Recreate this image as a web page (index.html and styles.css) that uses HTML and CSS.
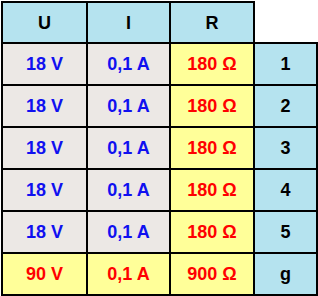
FILE: index.html
```html
<!DOCTYPE html>
<html>
<head>
<meta charset="utf-8">
<link rel="stylesheet" href="styles.css">
</head>
<body>
<table class="grid">
  <colgroup>
    <col class="c1"><col class="c2"><col class="c3"><col class="c4">
  </colgroup>
  <tr class="head">
    <td class="hd first">U</td>
    <td class="hd">I</td>
    <td class="hd">R</td>
    <td class="blank"></td>
  </tr>
  <tr class="row">
    <td class="grey blue first">18 V</td>
    <td class="grey blue">0,1 A</td>
    <td class="yellow red">180 Ω</td>
    <td class="hd">1</td>
  </tr>
  <tr class="row">
    <td class="grey blue first">18 V</td>
    <td class="grey blue">0,1 A</td>
    <td class="yellow red">180 Ω</td>
    <td class="hd">2</td>
  </tr>
  <tr class="row">
    <td class="grey blue first">18 V</td>
    <td class="grey blue">0,1 A</td>
    <td class="yellow red">180 Ω</td>
    <td class="hd">3</td>
  </tr>
  <tr class="row">
    <td class="grey blue first">18 V</td>
    <td class="grey blue">0,1 A</td>
    <td class="yellow red">180 Ω</td>
    <td class="hd">4</td>
  </tr>
  <tr class="row">
    <td class="grey blue first">18 V</td>
    <td class="grey blue">0,1 A</td>
    <td class="yellow red">180 Ω</td>
    <td class="hd">5</td>
  </tr>
  <tr class="row">
    <td class="yellow red first">90 V</td>
    <td class="yellow red">0,1 A</td>
    <td class="yellow red">900 Ω</td>
    <td class="hd">g</td>
  </tr>
</table>
</body>
</html>
```
FILE: styles.css
```css
html, body {
  margin: 0;
  padding: 0;
  background: #ffffff;
}
body {
  padding: 1px 0 0 1px;
}
.grid {
  border-collapse: separate;
  border-spacing: 0;
  table-layout: fixed;
  width: 317px;
  font-family: "Liberation Sans", Arial, sans-serif;
  font-weight: bold;
  font-size: 18px;
}
.c1 { width: 87px; }
.c2 { width: 83px; }
.c3 { width: 84px; }
.c4 { width: 63px; }
.grid td {
  padding: 0;
  text-align: center;
  vertical-align: middle;
  border-right: 2px solid #000;
  border-bottom: 2px solid #000;
  line-height: 20px;
}
.grid td.first {
  border-left: 2px solid #000;
}
.head td {
  border-top: 2px solid #000;
  height: 39px;
}
.head td.blank {
  border-top: none;
  border-right: none;
  background: #ffffff;
}
.row td {
  height: 40px;
}
.hd {
  background: #b5e3ef;
  color: #000;
}
.grey {
  background: #ece8e5;
}
.yellow {
  background: #ffff99;
}
.blue {
  color: #1010f0;
}
.red {
  color: #ff0000;
}
```
